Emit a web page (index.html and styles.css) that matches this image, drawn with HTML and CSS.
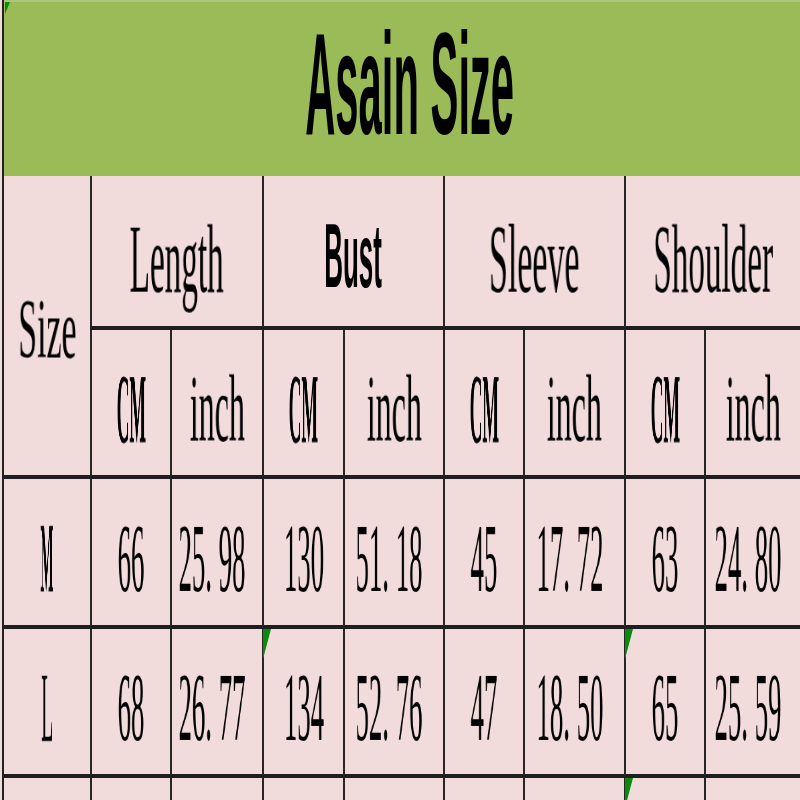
FILE: index.html
```html
<!DOCTYPE html>
<html>
<head>
<meta charset="utf-8">
<link rel="stylesheet" href="styles.css">
</head>
<body>
<div class="sheet">
  <div class="title"><span class="flag flag-tl"></span><span class="title-text">Asain Size</span></div>

  <div class="cell size"><span class="t sz">Size</span></div>
  <div class="cell grp"><span class="t hd-len">Length</span></div>
  <div class="cell grp grp-bust"><span class="bust">Bust</span></div>
  <div class="cell grp"><span class="t hd-slv">Sleeve</span></div>
  <div class="cell grp"><span class="t hd-sho">Shoulder</span></div>

  <div class="cell unit"><span class="t cm">CM</span></div>
  <div class="cell unit"><span class="t inch">inch</span></div>
  <div class="cell unit"><span class="t cm">CM</span></div>
  <div class="cell unit"><span class="t inch">inch</span></div>
  <div class="cell unit"><span class="t cm">CM</span></div>
  <div class="cell unit"><span class="t inch">inch</span></div>
  <div class="cell unit"><span class="t cm">CM</span></div>
  <div class="cell unit"><span class="t inch">inch</span></div>

  <div class="cell data first"><span class="t sm">M</span></div>
  <div class="cell data"><span class="t n">66</span></div>
  <div class="cell data dec"><span class="t n">25<span class="pt">.</span>98</span></div>
  <div class="cell data"><span class="t n">130</span></div>
  <div class="cell data dec"><span class="t n">51<span class="pt">.</span>18</span></div>
  <div class="cell data"><span class="t n">45</span></div>
  <div class="cell data dec"><span class="t n">17<span class="pt">.</span>72</span></div>
  <div class="cell data"><span class="t n">63</span></div>
  <div class="cell data dec"><span class="t n">24<span class="pt">.</span>80</span></div>

  <div class="cell data first"><span class="t sl">L</span></div>
  <div class="cell data"><span class="t n">68</span></div>
  <div class="cell data dec"><span class="t n">26<span class="pt">.</span>77</span></div>
  <div class="cell data"><span class="flag"></span><span class="t n">134</span></div>
  <div class="cell data dec"><span class="t n">52<span class="pt">.</span>76</span></div>
  <div class="cell data"><span class="t n">47</span></div>
  <div class="cell data dec"><span class="t n">18<span class="pt">.</span>50</span></div>
  <div class="cell data"><span class="flag"></span><span class="t n">65</span></div>
  <div class="cell data dec"><span class="t n">25<span class="pt">.</span>59</span></div>

  <div class="cell empty first"></div>
  <div class="cell empty"></div>
  <div class="cell empty"></div>
  <div class="cell empty"></div>
  <div class="cell empty"></div>
  <div class="cell empty"></div>
  <div class="cell empty"></div>
  <div class="cell empty"><span class="flag"></span></div>
  <div class="cell empty"></div>
</div>
</body>
</html>
```
FILE: styles.css
```css
html, body {
  margin: 0;
  padding: 0;
  background: #f2dcdb;
}

.sheet {
  box-sizing: border-box;
  width: 798px;
  height: 800px;
  margin-left: 2px;
  border-left: 2px solid #222;
  overflow: hidden;
  background: #f2dcdb;
  display: grid;
  grid-template-columns: 86px 80px 92px 81px 100px 80px 101px 80px 96px;
  grid-template-rows: 176px 154px 149px 150px 149px 40px;
}

.title {
  grid-column: 1 / -1;
  position: relative;
  box-sizing: border-box;
  background: #9bbb59;
  border-top: 2px solid #acc67b;
  padding-top: 10px;
  padding-left: 16px;
  text-align: center;
}

.title-text {
  display: inline-block;
  font-family: "Liberation Sans", Arial, sans-serif;
  font-weight: 700;
  font-size: 145px;
  line-height: 145px;
  color: #000;
  white-space: nowrap;
  transform: scaleX(0.288);
}

.cell {
  position: relative;
  box-sizing: border-box;
  border-left: 2px solid #262626;
  border-bottom: 4px solid #1e1e1e;
  display: flex;
  align-items: center;
  justify-content: center;
}

.cell.first, .cell.size {
  border-left: none;
}

.size {
  grid-row: span 2;
  padding-top: 9px;
}

.grp {
  grid-column: span 2;
  padding-top: 17px;
}

.grp.grp-bust {
  padding-top: 9px;
}

.unit {
  padding-top: 15px;
}

.data {
  padding-top: 13px;
}

.data.dec {
  padding-right: 10px;
}

.empty {
  border-bottom: none;
}

.t {
  display: inline-block;
  font-family: "Liberation Serif", "Times New Roman", serif;
  font-size: 40px;
  line-height: 40px;
  color: #000;
  white-space: nowrap;
  will-change: transform;
}

.pt {
  display: inline-block;
  width: 0.5em;
  text-align: left;
}

.n {
  transform: scale(0.67, 2.44);
}

.sm {
  font-weight: 700;
  transform: scale(0.35, 2.49);
}

.sl {
  transform: scale(0.5, 2.49);
}

.cm {
  font-weight: 700;
  transform: scale(0.44, 2.45);
}

.inch {
  transform: scale(0.8, 2.4);
}

.hd-len {
  transform: scale(0.83, 2.45);
}

.hd-slv {
  transform: scale(0.85, 2.45);
}

.hd-sho {
  transform: scale(0.83, 2.45);
}

.sz {
  transform: scale(0.85, 2.11);
}

.bust {
  display: inline-block;
  font-family: "Liberation Sans", Arial, sans-serif;
  font-weight: 700;
  font-size: 91px;
  line-height: 91px;
  white-space: nowrap;
  transform: scaleX(0.285);
}

.flag {
  position: absolute;
  top: 0;
  left: -1px;
  width: 8px;
  height: 30px;
  background: #0b8a0b;
  clip-path: polygon(0 0, 100% 0, 0 100%);
}

.flag-tl {
  left: 1px;
  width: 5px;
  height: 12px;
}
```
